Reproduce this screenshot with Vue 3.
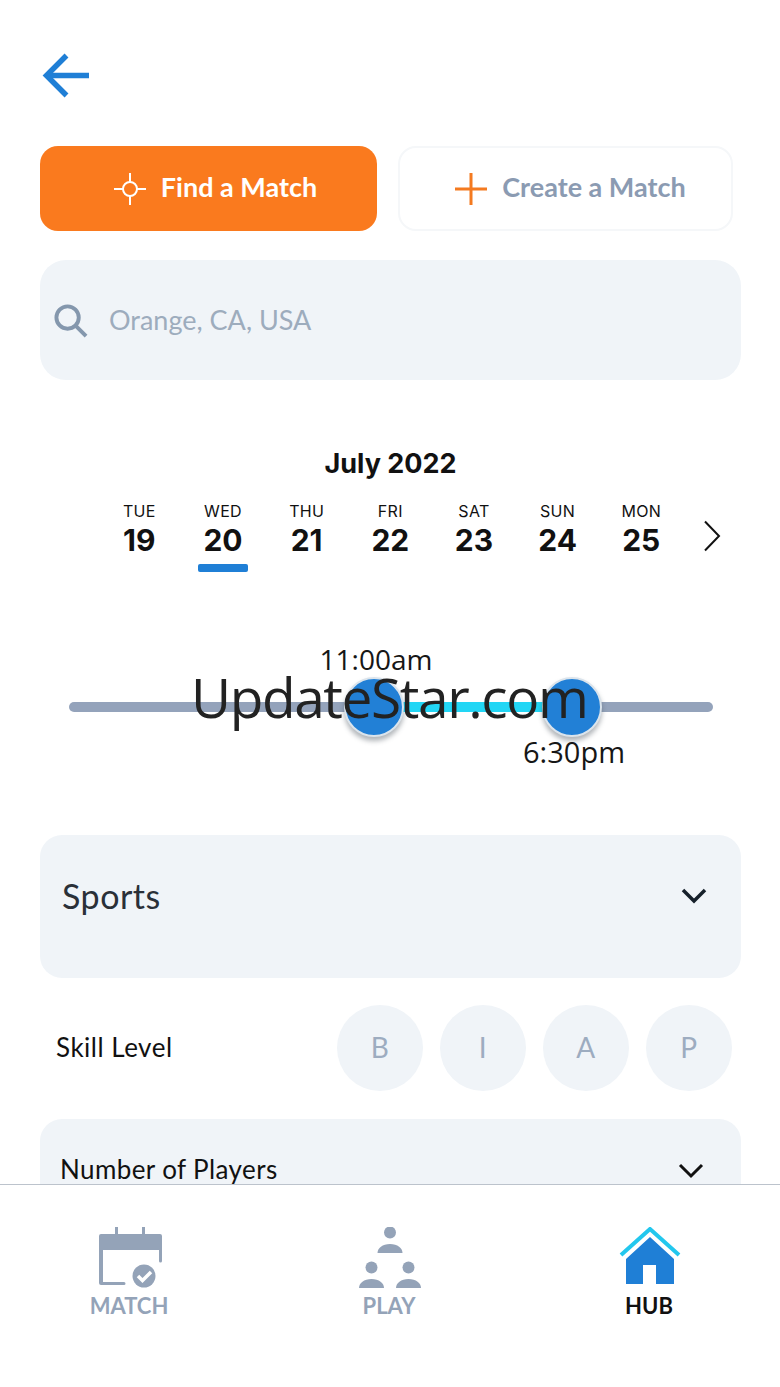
<script setup>
const days = [
  { name: 'TUE', num: 19 },
  { name: 'WED', num: 20, active: true },
  { name: 'THU', num: 21 },
  { name: 'FRI', num: 22 },
  { name: 'SAT', num: 23 },
  { name: 'SUN', num: 24 },
  { name: 'MON', num: 25 },
];
const levels = ['B', 'I', 'A', 'P'];
</script>

<template>
  <div class="app">
    <div class="main">
      <svg class="back" width="48" height="46" viewBox="0 0 48 46" fill="none" stroke="#1f7fd6" stroke-width="5.500">
        <path d="M47 22.500H5" />
        <path d="M24.500 2.500L4.500 22.500L24.500 42.500" />
      </svg>

      <div class="actions">
        <div class="btn find">
          <svg width="32" height="32" viewBox="0 0 32 32" fill="none" stroke="#fff" stroke-width="2">
            <circle cx="16" cy="16" r="7" />
            <path d="M16 0V9M16 23V32M0 16H9M23 16H32" />
          </svg>
          <span>Find a Match</span>
        </div>
        <div class="btn create">
          <svg width="32" height="32" viewBox="0 0 32 32" fill="none" stroke="#f47a20" stroke-width="3">
            <path d="M16 0V32M0 16H32" />
          </svg>
          <span>Create a Match</span>
        </div>
      </div>

      <div class="search">
        <svg width="35" height="35" viewBox="0 0 36 36" fill="none" stroke="#8497ad">
          <circle cx="15" cy="15" r="11.500" stroke-width="4" />
          <path d="M23.500 23.500L34 34" stroke-width="4" />
        </svg>
        <span>Orange, CA, USA</span>
      </div>

      <div class="month">July 2022</div>
      <div class="days">
        <div v-for="d in days" :key="d.num" class="day">
          <div class="day-name">{{ d.name }}</div>
          <div class="day-num">{{ d.num }}</div>
          <div class="day-bar" :class="{ on: d.active }"></div>
        </div>
        <svg class="next" width="18" height="32" viewBox="0 0 18 32" fill="none" stroke="#111" stroke-width="2">
          <path d="M2 1.500L16 16L2 30.500" />
        </svg>
      </div>

      <div class="slider">
        <div class="track">
          <div class="fill"></div>
        </div>
        <div class="handle h1"></div>
        <div class="handle h2"></div>
        <div class="time t1">11:00am</div>
        <div class="time t2">6:30pm</div>
      </div>

      <div class="select sports">
        <span>Sports</span>
        <svg width="26" height="16" viewBox="0 0 26 16" fill="none" stroke="#16202b" stroke-width="3.500">
          <path d="M2 2L13 13L24 2" />
        </svg>
      </div>

      <div class="skill">
        <span>Skill Level</span>
        <div class="levels">
          <div v-for="l in levels" :key="l" class="level">{{ l }}</div>
        </div>
      </div>

      <div class="select players">
        <span>Number of Players</span>
        <svg width="26" height="16" viewBox="0 0 26 16" fill="none" stroke="#111" stroke-width="3">
          <path d="M2 2L13 13L24 2" />
        </svg>
      </div>
    </div>

    <nav class="nav">
      <div class="tab match">
        <svg width="64" height="62" viewBox="0 0 64 62">
          <path d="M16 0h3v8h-3zM43 0h3v8h-3z" fill="#94a3b8" />
          <path d="M0 9a2 2 0 0 1 2-2h59a2 2 0 0 1 2 2v25a1.500 1.500 0 0 1-3 0V23H4v32h21a1.500 1.500 0 0 1 0 3H2a2 2 0 0 1-2-2z" fill="#94a3b8" />
          <circle cx="45" cy="49" r="11.500" fill="#94a3b8" />
          <path d="M39 49l4.500 4.500L52 45" fill="none" stroke="#fff" stroke-width="3.500" />
        </svg>
        <span>MATCH</span>
      </div>
      <div class="tab play">
        <svg width="64" height="62" viewBox="0 0 64 62" fill="#94a3b8">
          <circle cx="32" cy="5.500" r="6" />
          <path d="M19.500 26c0-5 5-9 12.500-9s12.500 4 12.500 9z" />
          <circle cx="13.500" cy="40.500" r="6" />
          <path d="M1 61c0-5 5-9 12.500-9S26 56 26 61z" />
          <circle cx="50.500" cy="40.500" r="6" />
          <path d="M38 61c0-5 5-9 12.500-9S63 56 63 61z" />
        </svg>
        <span>PLAY</span>
      </div>
      <div class="tab current">
        <svg width="64" height="62" viewBox="0 0 64 62">
          <path d="M4 28L33 2L62 28" fill="none" stroke="#22c7ee" stroke-width="4" />
          <path d="M33 10L57 32V57H39V38H26V57H9V32z" fill="#1f7fd6" />
        </svg>
        <span>HUB</span>
      </div>
    </nav>

    <div class="mark">UpdateStar.com</div>
  </div>
</template>

<style>
html, body {
  background: #fff;
}
</style>

<style scoped>
.app {
  position: relative;
  width: 780px;
  height: 1387px;
  overflow: hidden;
  background: #fff;
  font-family: Lato, "Open Sans", sans-serif;
}

.main {
  height: 1184px;
  overflow: hidden;
  padding: 0 39px 0 40px;
  box-sizing: border-box;
}

.back {
  display: block;
  margin: 53px 0 0 2px;
}

.actions {
  display: flex;
  gap: 21px;
  margin-top: 47px;
  padding-right: 8px;
}

.btn {
  display: flex;
  align-items: center;
  justify-content: center;
  height: 85px;
  box-sizing: border-box;
  border-radius: 18px;
  font-size: 27px;
  font-weight: 700;
  gap: 15px;
}

.btn span {
  position: relative;
  top: -2px;
}

.find {
  width: 337px;
  background: #fa7a1e;
  color: #fff;
  padding-left: 14px;
}

.create {
  width: 335px;
  background: #fff;
  border: 2px solid #f5f7f9;
  color: #8b9bb2;
  padding-left: 10px;
}

.search {
  display: flex;
  align-items: center;
  gap: 21px;
  height: 120px;
  margin-top: 29px;
  padding-left: 13px;
  background: #f0f4f8;
  border-radius: 26px;
  font-size: 27px;
  color: #9dacbd;
}

.search span {
  position: relative;
  top: -1px;
}

.month {
  margin-top: 68px;
  text-align: center;
  font-family: Inter, sans-serif;
  font-size: 27px;
  font-weight: 700;
  line-height: 32px;
  color: #111;
}

.days {
  display: flex;
  align-items: flex-start;
  margin-top: 21px;
  padding-left: 57.500px;
}

.day {
  width: 83.670px;
  text-align: center;
  font-family: Inter, sans-serif;
  color: #111;
}

.day-name {
  font-size: 16px;
  letter-spacing: 0.3px;
  line-height: 20px;
}

.day-num {
  margin-top: 3px;
  font-size: 30px;
  font-weight: 700;
  line-height: 32px;
}

.day-bar {
  width: 50px;
  height: 8px;
  margin: 8px auto 0;
  border-radius: 2px;
}

.day-bar.on {
  background: #1f7fd6;
}

.next {
  margin: 19px 0 0 20px;
}

.slider {
  position: relative;
  height: 225px;
  margin-top: 38px;
}

.track {
  position: absolute;
  left: 29px;
  top: 92px;
  width: 644px;
  height: 10px;
  border-radius: 5px;
  background: #94a3bb;
}

.fill {
  width: 198px;
  height: 10px;
  margin-left: 305px;
  background: #22d6f5;
}

.handle {
  position: absolute;
  top: 67px;
  width: 56px;
  height: 56px;
  border: 2px solid #dbe4ec;
  border-radius: 50%;
  background: #2280d6;
  box-shadow: 0 4px 5px rgba(60, 70, 80, 0.4);
}

.h1 {
  left: 304px;
}

.h2 {
  left: 502px;
}

.time {
  position: absolute;
  font-family: "Open Sans", sans-serif;
  font-size: 28px;
  line-height: 34px;
  color: #161616;
  transform: translateX(-50%);
  white-space: nowrap;
}

.t1 {
  left: 336px;
  top: 32px;
}

.t2 {
  left: 534px;
  top: 125px;
  font-size: 29px;
}

.select {
  display: flex;
  align-items: center;
  justify-content: space-between;
  box-sizing: border-box;
  background: #f0f4f8;
  border-radius: 22px;
}

.sports {
  height: 143px;
  padding: 0 34px 22px 22px;
  font-size: 34px;
  letter-spacing: 0.5px;
  color: #2a3038;
}

.skill {
  display: flex;
  align-items: center;
  justify-content: space-between;
  margin-top: 27px;
  padding: 0 9px 0 16px;
  font-size: 26px;
  letter-spacing: 0.5px;
  color: #111;
}

.skill > span {
  position: relative;
  top: -1px;
}

.levels {
  display: flex;
  gap: 17px;
}

.level {
  display: flex;
  align-items: center;
  justify-content: center;
  width: 86px;
  height: 86px;
  padding-bottom: 2px;
  box-sizing: border-box;
  border-radius: 50%;
  background: #f0f4f8;
  font-size: 28px;
  color: #9dacc0;
}

.players {
  height: 100px;
  margin-top: 28px;
  padding: 34px 37px 0 20px;
  align-items: flex-start;
  font-size: 26px;
  letter-spacing: 0.4px;
  color: #111;
}

.players svg {
  margin-top: 10px;
}

.nav {
  display: flex;
  justify-content: space-between;
  height: 203px;
  box-sizing: border-box;
  border-top: 1px solid #bcc3cc;
  padding: 42px 99px 0;
}

.tab {
  display: flex;
  flex-direction: column;
  align-items: center;
  width: 64px;
  font-size: 22px;
  font-weight: 700;
  line-height: 24px;
  color: #94a3b8;
}

.tab span {
  margin-top: 5px;
}

.match span {
  margin-left: -4px;
}

.play span {
  margin-left: -2px;
}

.tab svg {
  flex: none;
}

.current {
  color: #111;
}

.mark {
  position: absolute;
  left: 191px;
  top: 659px;
  font-family: "Open Sans", sans-serif;
  font-size: 55px;
  letter-spacing: -1.400px;
  line-height: 75px;
  color: #222;
  white-space: nowrap;
}
</style>
